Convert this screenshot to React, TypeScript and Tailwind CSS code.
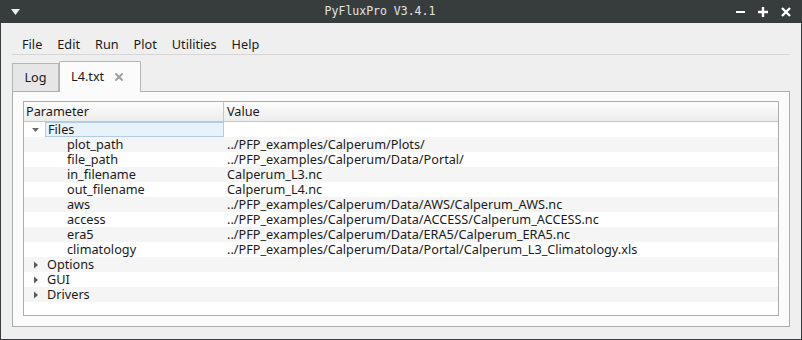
import { X } from 'lucide-react'

const files: [string, string][] = [
  ['plot_path', '../PFP_examples/Calperum/Plots/'],
  ['file_path', '../PFP_examples/Calperum/Data/Portal/'],
  ['in_filename', 'Calperum_L3.nc'],
  ['out_filename', 'Calperum_L4.nc'],
  ['aws', '../PFP_examples/Calperum/Data/AWS/Calperum_AWS.nc'],
  ['access', '../PFP_examples/Calperum/Data/ACCESS/Calperum_ACCESS.nc'],
  ['era5', '../PFP_examples/Calperum/Data/ERA5/Calperum_ERA5.nc'],
  ['climatology', '../PFP_examples/Calperum/Data/Portal/Calperum_L3_Climatology.xls'],
]

const sections = ['Options', 'GUI', 'Drivers']

function Arrow({ open }: { open?: boolean }) {
  return (
    <svg width="8" height="8" viewBox="0 0 8 8" className="shrink-0">
      {open ? <path d="M0 2h7L3.5 6z" fill="#6a6a6a" /> : <path d="M2 0.5v7L6 4z" fill="#5a5a5a" />}
    </svg>
  )
}

export default function App() {
  return (
    <div
      className="flex h-[340px] w-[802px] flex-col overflow-hidden bg-[#373c3d]"
      style={{ fontFamily: '"Noto Sans", "Open Sans", sans-serif' }}
    >
      {/* title bar */}
      <div className="flex h-[23px] shrink-0 items-center px-[11px] text-[#e4e4e4]">
        <svg width="9" height="6" viewBox="0 0 9 6">
          <path d="M0 0h9L4.5 6z" fill="#eeeeee" />
        </svg>
        <div className="flex-1 pl-[4px] text-center text-[11.5px]" style={{ fontFamily: '"DejaVu Sans Mono", monospace' }}>
          PyFluxPro V3.4.1
        </div>
        <div className="flex items-center gap-[13px] text-[14px] font-bold text-white">
          <span className="block h-[2px] w-[9px] bg-white" />
          <svg width="10" height="10" viewBox="0 0 10 10">
            <path d="M5 0v10M0 5h10" stroke="#fff" strokeWidth="2.4" />
          </svg>
          <svg width="10" height="10" viewBox="0 0 10 10">
            <path d="M1 1l8 8M9 1l-8 8" stroke="#fff" strokeWidth="2.4" />
          </svg>
        </div>
      </div>

      {/* body */}
      <div className="mx-px mb-px flex flex-1 flex-col bg-[#efefef] px-[11px] text-[12.7px] text-[#1a1a1a]">
        <div className="flex h-[32px] shrink-0 items-end gap-[15px] border-b border-[#d6d6d6] pl-[10px] leading-[20px]">
          <span>File</span>
          <span>Edit</span>
          <span>Run</span>
          <span>Plot</span>
          <span>Utilities</span>
          <span>Help</span>
        </div>

        {/* tabs */}
        <div className="mt-[6px] flex h-[30px] shrink-0 items-end">
          <div className="flex h-[28px] w-[47px] items-center justify-center border border-b-0 border-[#b5b5b5] bg-[#e6e6e6]">
            Log
          </div>
          <div className="relative z-10 -mb-px flex h-[31px] w-[82px] items-center gap-[9px] rounded-t-[2px] border border-b-0 border-[#b5b5b5] bg-[#fbfbfb] pl-[11px]">
            L4.txt
            <X size={12} strokeWidth={4} color="#a0a0a0" />
          </div>
        </div>

        {/* panel */}
        <div className="flex h-[236px] shrink-0 flex-col border border-[#adadad] bg-[#fbfbfb] px-[10px] pb-[10px] pt-[9px]">
          <div className="flex-1 border border-[#adadad] bg-white leading-[15px]">
            <div className="flex h-[20px] border-b border-[#c6c6c6] bg-gradient-to-b from-[#fdfdfd] to-[#ececec]">
              <div className="flex w-[200px] items-center border-r border-[#c6c6c6] pl-[2px]">Parameter</div>
              <div className="flex items-center pl-[3px]">Value</div>
            </div>

            <div className="flex h-[15px]">
              <div className="flex w-[200px] items-center">
                <div className="flex w-[21px] justify-center pl-[2px]">
                  <Arrow open />
                </div>
                <div className="flex h-[15px] flex-1 items-center border border-[#b0cde4] bg-[#e8f2fb] pl-[2px]">Files</div>
              </div>
            </div>

            {files.map(([k, v], i) => (
              <div key={k} className={`flex h-[15px] items-center ${i % 2 === 0 ? 'bg-[#f5f5f5]' : 'bg-white'}`}>
                <div className="w-[200px] pl-[43px]">{k}</div>
                <div className="pl-[3px]">{v}</div>
              </div>
            ))}

            {sections.map((s, i) => (
              <div key={s} className={`flex h-[15px] items-center ${i % 2 === 0 ? 'bg-[#f5f5f5]' : 'bg-white'}`}>
                <div className="flex w-[21px] justify-center pl-[2px]">
                  <Arrow />
                </div>
                <div className="pl-[2px]">{s}</div>
              </div>
            ))}
          </div>
        </div>
      </div>
    </div>
  )
}
